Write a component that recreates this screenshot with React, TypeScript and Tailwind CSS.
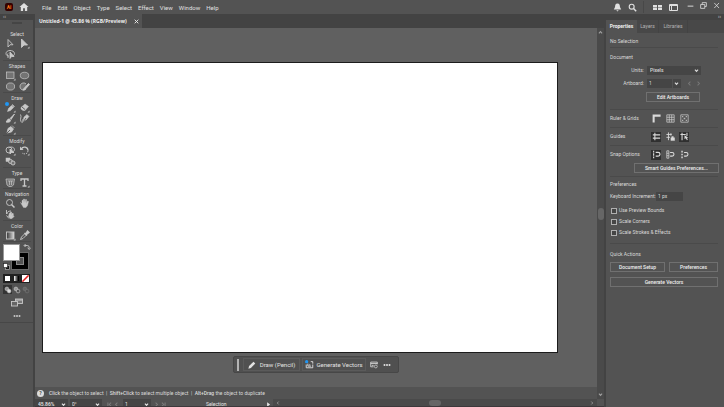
import { useState } from 'react'
import type { ReactNode } from 'react'
import clsx from 'clsx'

type Tool = { name: string; icon: ReactNode }
type ToolGroup = { label: string; tools: Tool[] }

const menus = ['File', 'Edit', 'Object', 'Type', 'Select', 'Effect', 'View', 'Window', 'Help']

function Icon({ children, className = 'size-[11px]', box = '0 0 22 22' }: { children: ReactNode; className?: string; box?: string }) {
  return (
    <svg
      viewBox={box}
      className={clsx('shrink-0', className)}
      fill="none"
      stroke="currentColor"
      strokeWidth="1.8"
      aria-hidden="true"
    >
      {children}
    </svg>
  )
}

const corner = <path d="M21 17v4h-4z" fill="currentColor" stroke="none" />

const toolGroups: ToolGroup[] = [
  {
    label: 'Select',
    tools: [
      { name: 'Selection', icon: <path d="M6 3v15l4-4.500h6z" /> },
      { name: 'Direct Selection', icon: <><path d="M5 2v17l5-5h7z" fill="currentColor" />{corner}</> },
      {
        name: 'Lasso',
        icon: (
          <>
            <path d="M8 14c-4 0-6-2-6-5 0-4 4-6 8-6s9 2 9 6c0 2-1 4-3 5M6 9c-3 3 1 5 0 9" />
            <path d="M10 6v13l3-4h5z" fill="currentColor" />
          </>
        ),
      },
    ],
  },
  {
    label: 'Shapes',
    tools: [
      { name: 'Rectangle', icon: <><rect x="3" y="4" width="15" height="13" fill="#747474" strokeWidth="1.400" />{corner}</> },
      { name: 'Ellipse', icon: <ellipse cx="11" cy="11" rx="8.500" ry="6.500" fill="#747474" strokeWidth="1.400" /> },
      { name: 'Polygon', icon: <path d="M7 4h8l4 4v6l-4 4H7l-4-4V8z" fill="#747474" strokeWidth="1.400" /> },
      {
        name: 'Shaper',
        icon: (
          <>
            <path d="M14 6C11 2 2 4 2 11s8 9 12 5" fill="#747474" />
            <path d="M9 16l10-11 2 2-9 10-4 1z" fill="currentColor" />
          </>
        ),
      },
    ],
  },
  {
    label: 'Draw',
    tools: [
      {
        name: 'Pencil',
        icon: (
          <>
            <circle cx="4" cy="4" r="4" fill="#2196f3" stroke="none" />
            <path d="M5 19l2-6 8-8 4 4-8 8z" fill="currentColor" strokeWidth="1" />
            <path d="M13 6l5 5" stroke="#535353" strokeWidth="1" />
            {corner}
          </>
        ),
      },
      { name: 'Eraser', icon: <><path d="M4 11l8-7 7 5-7 8H8l-4-3z" fill="currentColor" strokeWidth="1" /><path d="M6 10l6 5" stroke="#535353" />{corner}</> },
      { name: 'Paintbrush', icon: <><path d="M19 2l-9 9 2 2zM8 12c-4 0-3 4-6 6 5 1 9 0 9-3z" fill="currentColor" />{corner}</> },
      {
        name: 'Curvature',
        icon: (
          <>
            <path d="M3 3c3 5-2 9 1 14s5-1 3-4" />
            <path d="M8 17l2-9 6-5 4 4-5 6z" fill="currentColor" strokeWidth="1" />
            <path d="M9 17l5-7" stroke="#535353" />
          </>
        ),
      },
      { name: 'Pen', icon: <><path d="M4 18l2-9 6-4 5 5-4 6zM14 3l5 5" fill="currentColor" strokeWidth="1.400" /><path d="M4 18l6-6" stroke="#535353" />{corner}</> },
    ],
  },
  {
    label: 'Modify',
    tools: [
      {
        name: 'Shape Builder',
        icon: (
          <>
            <circle cx="8" cy="10" r="6" />
            <path d="M7 6c5-4 12-1 12 3 0 3-3 5-6 5" />
            <path d="M10 8v10l3-3h5z" fill="currentColor" />
            {corner}
          </>
        ),
      },
      { name: 'Rotate', icon: <><path d="M5 8c2-6 13-5 13 3" strokeWidth="2.400" /><path d="M18 11c0 8-8 8-12 5" strokeDasharray="3 2" /><path d="M2 3v7h7z" fill="currentColor" stroke="none" />{corner}</> },
      {
        name: 'Blend',
        icon: (
          <>
            <rect x="2" y="4" width="8" height="7" fill="currentColor" strokeWidth="1" />
            <circle cx="11" cy="11" r="4" fill="#747474" />
            <circle cx="16" cy="14" r="4" fill="#747474" />
          </>
        ),
      },
    ],
  },
  {
    label: 'Type',
    tools: [
      { name: 'Retype', icon: <path d="M2 4h17l-2 12-4 3H8l-4-3zM6 8h10M9 8v8M13 8v8" fill="#747474" strokeWidth="1.400" /> },
      { name: 'Type', icon: <><path d="M4 8V4h14v4M11 4v14M7 18h8" strokeWidth="2.600" />{corner}</> },
    ],
  },
  {
    label: 'Navigation',
    tools: [
      { name: 'Zoom', icon: <><circle cx="9" cy="9" r="6" /><path d="M13 13l6 6" strokeWidth="3" /></> },
      {
        name: 'Hand',
        icon: (
          <path
            d="M3 9l3 3V5l2-1 1 6V2h2l1 8 1-7h2v8l2-5 2 1-2 8-3 4H9z"
            fill="currentColor"
            strokeWidth="0.800"
          />
        ),
      },
      {
        name: 'Rotate View',
        icon: (
          <>
            <path d="M4 10c0-4 3-6 8-6M3 2v8M3 13l5 6" />
            <path d="M9 8h2v5-7h2v6l2-4 2 2-2 5 2-2 1 2-4 4h-4l-3-4z" fill="currentColor" strokeWidth="1" />
          </>
        ),
      },
    ],
  },
  {
    label: 'Color',
    tools: [
      {
        name: 'Gradient',
        icon: (
          <>
            <defs>
              <linearGradient id="toolGradient">
                <stop offset="0" stopColor="#333" />
                <stop offset="1" stopColor="#ddd" />
              </linearGradient>
            </defs>
            <rect x="3" y="4" width="15" height="14" fill="url(#toolGradient)" />
            {corner}
          </>
        ),
      },
      { name: 'Eyedropper', icon: <><path d="M3 19l2-5 7-7 3 3-7 7z" /><path d="M11 6l5 5M13 8l4-6 3 3-5 4z" fill="currentColor" strokeWidth="2.600" /></> },
    ],
  },
]

function ToolButton({ name, icon }: Tool) {
  return (
    <button aria-label={name} className="flex h-[11px] items-center justify-center">
      <Icon>{icon}</Icon>
    </button>
  )
}

function Toolbar() {
  return (
    <aside className="flex w-[35px] shrink-0 flex-col border-r-2 border-[#434343] bg-[#535353] text-[#c8c8c8]">
      <div className="h-1.5 bg-[#434343] pl-[3px] text-[5px] leading-[5px]">‹‹</div>
      <div className="flex h-[9px] justify-center pt-0.5">
        <span className="h-0.5 w-2.5 bg-[#454545]" />
      </div>
      {toolGroups.map(group => (
        <div key={group.label} className="ml-[3px] mr-0.5 border-b border-[#4a4a4a]">
          <h2 className="h-[9px] text-center leading-[10px] text-[#dedede]">{group.label}</h2>
          <div className="grid grid-cols-2">
            {group.tools.map(tool => (
              <ToolButton key={tool.name} {...tool} />
            ))}
          </div>
        </div>
      ))}

      {/* Fill and stroke swatches */}
      <div className="relative mx-[3px] h-[30px]">
        <button aria-label="Stroke" className="absolute left-[9px] top-[11px] size-4 border-4 border-black bg-[#535353] outline outline-[#6a6a6a]">
          <span className="block size-2 border border-[#8a8a8a]" />
        </button>
        <button aria-label="Fill" className="absolute left-0 top-0.5 size-[17px] border border-[#999] bg-white" />
        <button aria-label="Swap" className="absolute left-[20px] top-px">
          <Icon className="size-[8px]"><path d="M4 7h8c4 0 5 3 5 7M7 3L3 7l4 4M13 13l4 5 4-5" strokeWidth="2.600" /></Icon>
        </button>
        <button aria-label="Default colors" className="absolute left-0 top-[21px]">
          <Icon className="size-[7px]"><rect x="8" y="8" width="12" height="12" fill="#111" /><rect x="2" y="2" width="12" height="12" fill="#fff" stroke="#222" /></Icon>
        </button>
      </div>

      <div className="mx-[3px] flex h-3 items-center justify-between">
        <button aria-label="Color" className="size-[9px] border-2 border-[#202020] bg-white" />
        <button aria-label="Gradient fill" className="size-[9px] border-2 border-[#202020] bg-linear-to-r from-white to-black" />
        <button aria-label="None" className="size-[9px] border border-[#202020] bg-white">
          <Icon className="size-[7px]"><path d="M1 21L21 1" stroke="#e02020" strokeWidth="5" /></Icon>
        </button>
      </div>
      <div className="mx-[3px] flex h-[11px] items-center justify-between">
        {['Draw Normal', 'Draw Behind', 'Draw Inside'].map((name, i) => (
          <button
            key={name}
            aria-label={name}
            className={clsx('flex size-[9px] items-center justify-center', i === 0 && 'bg-[#343434]', i === 2 && 'opacity-30')}
          >
            <Icon className="size-2"><circle cx="8" cy="8" r="5" fill="#999" /><circle cx="14" cy="14" r="5" fill={i === 0 ? '#ddd' : '#535353'} /></Icon>
          </button>
        ))}
      </div>
      <button aria-label="Screen Mode" className="flex h-[14px] items-center justify-center">
        <Icon className="h-[9px] w-3" box="0 0 24 18"><rect x="9" y="2" width="14" height="9" fill="#777" /><rect x="1" y="7" width="12" height="9" fill="#666" /><path d="M10 4h12" strokeWidth="2" /></Icon>
      </button>
      <button aria-label="Edit Toolbar" className="flex h-3.5 items-center justify-center border-b border-[#474747]">
        <Dots />
      </button>
    </aside>
  )
}

function Dots() {
  return (
    <Icon className="h-1 w-2" box="0 0 16 8">
      <g fill="currentColor" stroke="none">
        <circle cx="3" cy="4" r="2" />
        <circle cx="8" cy="4" r="2" />
        <circle cx="13" cy="4" r="2" />
      </g>
    </Icon>
  )
}

function Chevron({ className = 'size-[5px]', d = 'M4 7l7 8 7-8' }: { className?: string; d?: string }) {
  return <Icon className={clsx('pointer-events-none', className)}><path d={d} strokeWidth="4.500" /></Icon>
}

function MenuBar() {
  return (
    <header className="flex h-[14px] shrink-0 items-center bg-[#535353] text-[#e0e0e0]">
      <span className="ml-[5px] flex size-2 items-center justify-center rounded-xs bg-[#330000] text-[5px] font-bold text-[#ff7b1a]">Ai</span>
      <button aria-label="Home" className="ml-1.5">
        <Icon className="size-[10px]"><path d="M1 11L11 2l10 9h-3v9h-5v-6H9v6H4v-9z" fill="currentColor" stroke="none" /></Icon>
      </button>
      <nav className="ml-[13px] flex gap-1.5 text-[6px]">
        {menus.map(menu => (
          <button key={menu}>{menu}</button>
        ))}
      </nav>
      <div className="ml-auto flex items-center">
        <button aria-label="Notifications">
          <Icon className="size-[9px]"><path d="M11 1c5 0 6 4 6 9l3 6H2l3-6c0-5 1-9 6-9zM8 18h6l-3 3z" fill="currentColor" stroke="none" /></Icon>
        </button>
        <button aria-label="Search" className="ml-1.5">
          <Icon className="size-[9px]"><circle cx="9" cy="9" r="6" strokeWidth="2.800" /><path d="M13 13l7 7" strokeWidth="3.500" /></Icon>
        </button>
        <span className="ml-1.5 h-3 w-px bg-[#484848]" />
        <button aria-label="Arrange Documents" className="ml-[9px]">
          <Icon className="h-[7px] w-[9px]" box="0 0 18 14"><path d="M0 2h8v5H0zM10 2h8v5h-8zM0 8h8v4H0zM10 8h8v4h-8z" fill="currentColor" stroke="none" /></Icon>
        </button>
        <button aria-label="Workspace" className="ml-[7px]">
          <Icon className="h-[7px] w-[9px]" box="0 0 18 14"><path d="M1 1h16v12H1zM1 3h16M5 3v10" strokeWidth="2" /></Icon>
        </button>
        <div className="mb-1 ml-[9px] flex items-center gap-1.5">
          <button aria-label="Minimize"><Icon className="size-[7px]"><path d="M2 13h18" strokeWidth="3" /></Icon></button>
          <button aria-label="Restore"><Icon className="size-[7px]"><path d="M2 8h13v12H2zM7 8V2h13v12h-5" strokeWidth="2.500" /></Icon></button>
          <button aria-label="Close" className="mr-1"><Icon className="size-[7px]"><path d="M4 3l15 16M19 3L4 19" strokeWidth="2.500" /></Icon></button>
        </div>
      </div>
    </header>
  )
}

function TaskBar() {
  return (
    <div className="mx-auto mt-[3px] flex h-[17px] shrink-0 items-center rounded-xs border border-[#474747] bg-[#505050] px-0.5 text-[6px] text-[#e2e2e2]">
      <span className="ml-px mr-1 h-3 w-0.5 bg-[#b4b4b4]" />
      <button className="flex h-[13px] w-[57px] items-center justify-center gap-1 border border-[#5b5b5b]">
        <Icon className="size-2"><path d="M1 21l2-7L15 2l5 5L8 19z" fill="currentColor" stroke="none" /></Icon>
        Draw (Pencil)
      </button>
      <button className="ml-0.5 flex h-[13px] w-16 items-center justify-center gap-0.5 whitespace-nowrap border border-[#5b5b5b]">
        <Icon className="size-[9px]">
          <path d="M3 11v8h16v-8M14 4h5v5M10 12h3M7 9v6M7 15h8" strokeWidth="2.200" />
          <circle cx="4" cy="4" r="4" fill="#2196f3" stroke="none" />
        </Icon>
        Generate Vectors
      </button>
      <button aria-label="Document Setup" className="ml-1">
        <Icon className="size-2"><path d="M10 16H2V3h18v6M2 7h18M5 12h5" strokeWidth="2.200" /><circle cx="16" cy="15" r="4" /></Icon>
      </button>
      <button aria-label="More" className="mx-[5px]"><Dots /></button>
    </div>
  )
}

function StatusBar() {
  return (
    <footer className="flex h-2 shrink-0 items-start overflow-hidden border-b border-[#3d383b] bg-[#535353] leading-[10px] text-[#e6e6e6]">
      <label className="flex w-[33px] items-center bg-[#454545]">
        <input aria-label="Zoom level" defaultValue="45.86%" className="w-full pl-[3px] font-medium leading-[10px]" />
        <Chevron className="mr-0.5 size-[5px]" />
      </label>
      <label className="ml-0.5 flex w-[32px] items-center bg-[#454545]">
        <input aria-label="Rotation" defaultValue="0°" className="w-full pl-0.5 leading-[10px]" />
        <Chevron className="mr-0.5 size-[5px]" />
      </label>
      <div className="ml-[5px] flex h-[10px] w-3 items-center justify-between text-[#7c7c7c]">
        <button aria-label="First"><Chevron d="M4 2v18M18 3l-8 8 8 8" /></button>
        <button aria-label="Previous"><Chevron d="M15 3l-8 8 8 8" /></button>
      </div>
      <label className="ml-1 flex w-[28px] items-center bg-[#454545]">
        <input aria-label="Artboard number" defaultValue="1" className="w-full pl-0.5 leading-[10px]" />
        <Chevron className="mr-0.5 size-[5px]" />
      </label>
      <div className="ml-[3px] flex h-[10px] w-3 items-center justify-between text-[#7c7c7c]">
        <button aria-label="Next"><Chevron d="M7 3l8 8-8 8" /></button>
        <button aria-label="Last"><Chevron d="M4 3l8 8-8 8M18 2v18" /></button>
      </div>
      <span className="ml-10 w-[60px]">Selection</span>
      <button aria-label="Status menu" className="flex h-[10px] items-center">
        <Icon className="size-[5px]"><path d="M5 1l13 10L5 21z" fill="currentColor" stroke="none" /></Icon>
      </button>
      <div className="ml-0.5 flex h-2 flex-1 items-center justify-between bg-[#4a4a4a] px-[3px] text-[#a0a0a0]">
        <Chevron d="M15 3l-8 8 8 8" className="size-1" />
        <span className="h-1.5 w-3 rounded-full bg-[#666]" />
        <Chevron d="M7 3l8 8-8 8" className="size-1" />
      </div>
      <span className="w-[7px]" />
    </footer>
  )
}

function DocumentWindow() {
  return (
    <main className="flex min-w-0 flex-1 flex-col">
      <div className="flex h-[14px] shrink-0 bg-[#434343]">
        <div className="flex items-center gap-[7px] bg-[#535353] pl-1 pr-[3px] text-[#f0f0f0]">
          <h1 className="font-['Open_Sans',sans-serif] font-bold">Untitled-1 @ 45.86 % (RGB/Preview)</h1>
          <button aria-label="Close document"><Icon className="size-[5px]"><path d="M3 3l16 16M19 3L3 19" strokeWidth="4" /></Icon></button>
        </div>
      </div>
      <div className="flex min-h-0 flex-1">
        <div className="flex min-w-0 flex-1 flex-col">
          <div className="flex flex-1 flex-col bg-[#606060] pb-[14px] pt-[34px]">
            <div className="ml-[7px] mr-[39px] flex-1 border border-[#1c1c1c] bg-white" />
            <TaskBar />
          </div>
          <div className="flex h-3 shrink-0 items-center bg-[#535353] pl-0.5 text-[#dadada]">
            <span className="mr-[5px] flex size-[7px] items-center justify-center rounded-full bg-[#dcdcdc] font-bold text-[#444]">?</span>
            <p className="whitespace-pre">
              <b className="font-medium">Click</b> the object to select{'  |  '}
              <b className="font-medium">Shift+Click</b> to select multiple object{'  |  '}
              <b className="font-medium">Alt+Drag</b> the object to duplicate
            </p>
          </div>
        </div>
        <div className="flex w-[7px] shrink-0 flex-col items-center justify-between bg-[#4a4a4a] py-0.5 text-[#a0a0a0]">
          <Chevron d="M4 15l7-8 7 8" />
          <span className="h-3 w-1.5 rounded-full bg-[#666]" />
          <Chevron />
        </div>
      </div>
      <StatusBar />
    </main>
  )
}

function IconToggle({ name, active, children }: { name: string; active?: boolean; children: ReactNode }) {
  return (
    <button
      aria-label={name}
      aria-pressed={!!active}
      className={clsx('flex size-[10px] items-center justify-center', active && 'bg-[#303030]')}
    >
      <Icon className="size-[9px]">{children}</Icon>
    </button>
  )
}

function OptionRow({ label, children }: { label: string; children: ReactNode }) {
  return (
    <div className="flex h-[18px] items-center border-b border-[#4a4a4a]">
      <span className="w-[41px]">{label}</span>
      <div className="flex gap-1">{children}</div>
    </div>
  )
}

function PanelButton({ children, className }: { children: ReactNode; className?: string }) {
  return (
    <button className={clsx('h-[10px] whitespace-nowrap border border-[#707070] text-center font-medium leading-[8px] text-[#f0f0f0]', className)}>
      {children}
    </button>
  )
}

function PropertiesPanel() {
  const [checks, setChecks] = useState<Record<string, boolean>>({})

  return (
    <aside className="flex w-[120px] shrink-0 flex-col border-l-2 border-[#434343] bg-[#535353] text-[#dadada]">
      <div className="h-1.5 bg-[#434343] pr-[3px] text-right leading-[5px]">››</div>
      <div className="flex h-[13px] bg-[#484848]">
        <button className="w-[31px] bg-[#535353] font-bold text-[#f0f0f0]">Properties</button>
        <button className="w-[22px] border-r border-[#434343] text-[#b4b4b4]">Layers</button>
        <button className="w-[29px] border-r border-[#434343] text-[#b4b4b4]">Libraries</button>
      </div>
      <div className="pl-1 pr-1.5">
        <p className="h-[15px] border-b border-[#4a4a4a] leading-[16px]">No Selection</p>

        {/* Document */}
        <section className="h-[62px] border-b border-[#4a4a4a] pt-1">
          <h2 className="h-[13px] leading-[10px]">Document</h2>
          <div className="flex h-[10px] items-center">
            <label htmlFor="units" className="w-[34px] text-right">Units:</label>
            <div className="ml-[3px] flex w-[54px] items-center bg-[#454545]">
              <select id="units" className="h-[9px] w-full appearance-none pl-[3px] font-medium leading-[9px]">
                <option>Pixels</option>
              </select>
              <Chevron className="mr-0.5 size-[5px]" />
            </div>
          </div>
          <div className="mt-[3px] flex h-[10px] items-center">
            <label htmlFor="artboard" className="w-[34px] text-right">Artboard:</label>
            <div className="ml-[3px] flex w-[34px] items-center bg-[#454545]">
              <input id="artboard" defaultValue="1" className="h-[9px] w-[26px] border-r border-[#535353] pl-0.5" />
              <Chevron className="ml-px size-[5px]" />
            </div>
            <div className="ml-1.5 flex gap-1 text-[#777]">
              <button aria-label="Previous artboard"><Chevron d="M15 3l-8 8 8 8" className="size-[5px]" /></button>
              <button aria-label="Next artboard"><Chevron d="M7 3l8 8-8 8" className="size-[5px]" /></button>
            </div>
          </div>
          <PanelButton className="ml-[36px] mt-1 block w-[54px]">Edit Artboards</PanelButton>
        </section>

        <OptionRow label="Ruler & Grids">
          <IconToggle name="Rulers"><path d="M4 21V4h17" strokeWidth="5" /></IconToggle>
          <IconToggle name="Grid"><path d="M2 2h18v18H2zM8 2v18M14 2v18M2 8h18M2 14h18" strokeWidth="1.600" /></IconToggle>
          <IconToggle name="Transparency Grid"><path d="M2 2h18v18H2z" strokeWidth="1.600" /><path d="M5 5h3v3H5zM14 5h3v3h-3zM9 9h4v4H9zM5 14h3v3H5zM14 14h3v3h-3z" fill="#b8b8b8" stroke="none" /></IconToggle>
        </OptionRow>
        <OptionRow label="Guides">
          <IconToggle name="Show Guides" active><path d="M2 7h18M2 15h18M7 2v18" strokeWidth="2.600" /></IconToggle>
          <IconToggle name="Lock Guides"><path d="M1 6h13M1 13h9M6 1v19M12 3v6" strokeWidth="2.200" /><path d="M12 14h9v7h-9zM14 14v-3h4v3" fill="currentColor" strokeWidth="1" /></IconToggle>
          <IconToggle name="Smart Guides" active><path d="M1 6h13M5 2v18M17 2v8" strokeWidth="2.600" /><path d="M11 8v10l3-3 3 5 2-1-2-5h4z" fill="currentColor" stroke="none" /></IconToggle>
        </OptionRow>
        <section className="h-[31px] border-b border-[#4a4a4a]">
          <div className="flex h-[17px] items-center">
            <span className="w-[41px]">Snap Options</span>
            <div className="flex gap-1">
              <IconToggle name="Snap to Point" active><path d="M4 2v4M4 8v6M4 16v4" strokeWidth="2.800" /><path d="M9 6h6c6 0 6 9 0 9H9" strokeWidth="3" /></IconToggle>
              <IconToggle name="Snap to Grid"><path d="M2 2h5v18H2zM2 8h5M2 14h5" /><path d="M10 6h5c6 0 6 9 0 9h-5" strokeWidth="2.600" /></IconToggle>
              <IconToggle name="Snap to Pixel"><path d="M5 2v4M5 9v4M5 16v4" strokeWidth="3.500" /><path d="M10 6h5c6 0 6 9 0 9h-5" strokeWidth="2.600" /></IconToggle>
            </div>
          </div>
          <PanelButton className="ml-6 block w-[85px]">Smart Guides Preferences...</PanelButton>
        </section>

        {/* Preferences */}
        <section className="h-[67px] border-b border-[#4a4a4a] pt-0.5">
          <h2 className="h-3 leading-[10px]">Preferences</h2>
          <div className="flex h-[10px] items-center">
            <label htmlFor="increment" className="whitespace-nowrap">Keyboard Increment:</label>
            <input id="increment" defaultValue="1 px" className="ml-auto mr-[35px] h-[9px] w-[27px] bg-[#454545] pl-0.5" />
          </div>
          <div className="mt-1">
            {['Use Preview Bounds', 'Scale Corners', 'Scale Strokes & Effects'].map(label => (
              <label key={label} className="flex h-[11px] items-center gap-0.5 pl-px">
                <input
                  type="checkbox"
                  checked={!!checks[label]}
                  onChange={e => setChecks({ ...checks, [label]: e.target.checked })}
                  className="size-[6px] appearance-none border border-[#b0b0b0] bg-[#454545] checked:bg-[#c0c0c0]"
                />
                {label}
              </label>
            ))}
          </div>
        </section>

        {/* Quick actions */}
        <section className="pt-[5px]">
          <h2 className="h-[13px] leading-[10px]">Quick Actions</h2>
          <div className="grid grid-cols-[55px_1fr] gap-x-1 gap-y-[5px]">
            <PanelButton>Document Setup</PanelButton>
            <PanelButton>Preferences</PanelButton>
            <PanelButton className="col-span-2">Generate Vectors</PanelButton>
          </div>
        </section>
      </div>
    </aside>
  )
}

export default function App() {
  return (
    <div className="flex h-screen flex-col overflow-hidden bg-[#535353] font-['Roboto','Open_Sans',sans-serif] text-[5px] leading-[7px]">
      <MenuBar />
      <div className="flex min-h-0 flex-1">
        <Toolbar />
        <DocumentWindow />
        <PropertiesPanel />
      </div>
    </div>
  )
}
